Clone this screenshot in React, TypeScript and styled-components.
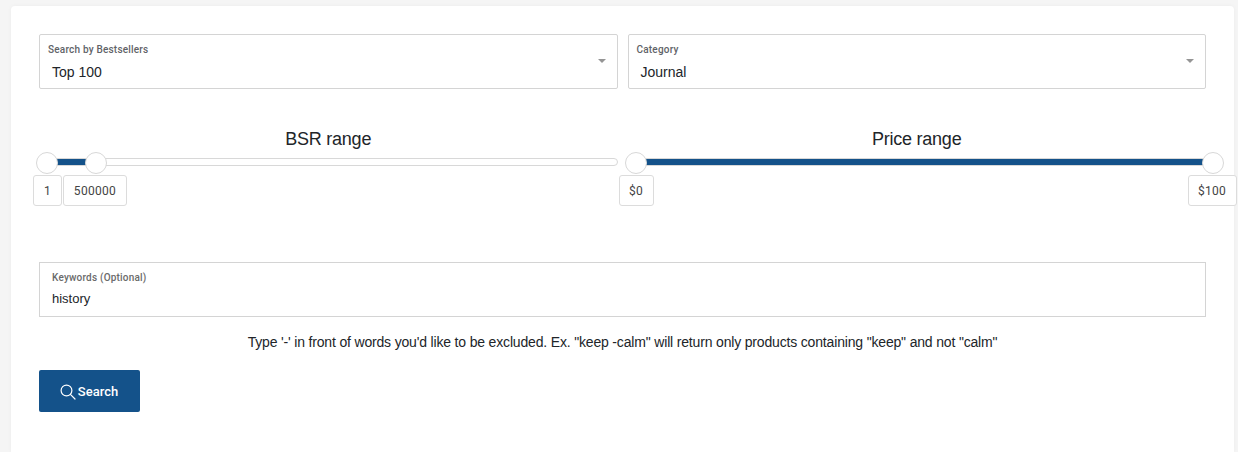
import styled, { createGlobalStyle } from "styled-components";

const GlobalStyle = createGlobalStyle`
  html, body {
    margin: 0;
    padding: 0;
    height: 452px;
    overflow: hidden;
    background: #f5f5f5;
    font-family: "Liberation Sans", Arial, sans-serif;
  }
`;

const SLIDERS = [
  {
    title: "BSR range",
    fillLeft: 8,
    fillWidth: 49,
    thumbs: [7, 56],
    labels: [
      { text: "1", left: -6, width: 29 },
      { text: "500000", left: 24, width: 64 },
    ],
  },
  {
    title: "Price range",
    fillLeft: 8,
    fillWidth: 577,
    thumbs: [7, 584],
    labels: [
      { text: "$0", left: -9, width: 35 },
      { text: "$100", left: 560, width: 49 },
    ],
  },
];

export default function App() {
  return (
    <>
      <GlobalStyle />
      <Page>
        <Card>
          <Row>
            <SelectField>
              <SelectLabel>Search by Bestsellers</SelectLabel>
              <Value>Top 100</Value>
              <Caret />
            </SelectField>
            <SelectField>
              <SelectLabel>Category</SelectLabel>
              <Value>Journal</Value>
              <Caret />
            </SelectField>
          </Row>
          <SliderRow>
            {SLIDERS.map((slider) => (
              <SliderBlock key={slider.title}>
                <SliderTitle>{slider.title}</SliderTitle>
                <Track>
                  <Fill $left={slider.fillLeft} $width={slider.fillWidth} />
                  {slider.thumbs.map((x) => (
                    <Thumb key={x} $x={x} />
                  ))}
                  {slider.labels.map((label) => (
                    <ValueLabel key={label.text} $left={label.left} $width={label.width}>
                      {label.text}
                    </ValueLabel>
                  ))}
                </Track>
              </SliderBlock>
            ))}
          </SliderRow>
          <KeywordField>
            <KeywordLabel>Keywords (Optional)</KeywordLabel>
            <KeywordValue>history</KeywordValue>
          </KeywordField>
          <Hint>
            Type '-' in front of words you'd like to be excluded. Ex. "keep -calm" will return only
            products containing "keep" and not "calm"
          </Hint>
          <SearchButton>
            <svg width="16" height="16" viewBox="0 0 16 16" fill="none" stroke="currentColor" strokeWidth="1.2">
              <circle cx="6.5" cy="6.5" r="5.4" />
              <path d="M10.4 10.4 L15 15" strokeLinecap="round" />
            </svg>
            <span>Search</span>
          </SearchButton>
        </Card>
      </Page>
    </>
  );
}

const Page = styled.div`
  height: 452px;
  padding: 6px 4px 0 11px;
  box-sizing: border-box;
`;

const Card = styled.div`
  height: 446px;
  box-sizing: border-box;
  background: #fff;
  border-radius: 4px 4px 0 0;
  padding: 28px 28px 0 28px;
  box-shadow: 0 0 4px rgba(0, 0, 0, 0.04);
`;

const Row = styled.div`
  display: grid;
  grid-template-columns: 1fr 1fr;
  gap: 10px;
`;

const SelectField = styled.div`
  position: relative;
  height: 55px;
  box-sizing: border-box;
  border: 1px solid #d4d4d4;
  border-radius: 2px;
  padding: 9px 8px 0;
`;

const SelectLabel = styled.div`
  font-family: Roboto, "Liberation Sans", sans-serif;
  font-size: 10px;
  line-height: 12px;
  font-weight: 500;
  letter-spacing: 0.2px;
  color: #5f6368;
`;

const Value = styled.div`
  margin: 8px 0 0 4px;
  font-size: 14px;
  line-height: 16px;
  color: #212529;
`;

const Caret = styled.div`
  position: absolute;
  right: 11px;
  top: 24px;
  width: 0;
  height: 0;
  border-left: 4.5px solid transparent;
  border-right: 4.5px solid transparent;
  border-top: 4.5px solid #959595;
`;

const SliderRow = styled.div`
  display: flex;
  gap: 10px;
  margin-top: 39px;
`;

const SliderBlock = styled.div`
  flex: 1;
  height: 134px;
`;

const SliderTitle = styled.div`
  text-align: center;
  font-size: 18px;
  line-height: 22px;
  letter-spacing: -0.25px;
  color: #212529;
`;

const Track = styled.div`
  position: relative;
  margin-top: 8px;
  height: 8px;
  box-sizing: border-box;
  border: 1px solid #d8d8d8;
  border-radius: 4px;
  background: #fff;
`;

const Fill = styled.div<{ $left: number; $width: number }>`
  position: absolute;
  top: 0;
  left: ${({ $left }) => $left}px;
  width: ${({ $width }) => $width}px;
  height: 6px;
  background: #14528a;
`;

const Thumb = styled.div<{ $x: number }>`
  position: absolute;
  top: -7px;
  left: ${({ $x }) => $x - 11}px;
  width: 20px;
  height: 20px;
  box-sizing: content-box;
  border: 1px solid #d8d8d8;
  border-radius: 50%;
  background: #fff;
`;

const ValueLabel = styled.div<{ $left: number; $width: number }>`
  position: absolute;
  top: 16px;
  left: ${({ $left }) => $left - 1}px;
  width: ${({ $width }) => $width}px;
  height: 31px;
  box-sizing: border-box;
  display: flex;
  align-items: center;
  justify-content: center;
  border: 1px solid #dcdcdc;
  border-radius: 3px;
  background: #fff;
  font-family: Roboto, "Liberation Sans", sans-serif;
  font-size: 12px;
  letter-spacing: 0.3px;
  color: #444;
`;

const KeywordField = styled.div`
  height: 55px;
  box-sizing: border-box;
  border: 1px solid #d4d4d4;
  padding: 9px 12px 0;
`;

const KeywordLabel = styled.div`
  font-family: Roboto, "Liberation Sans", sans-serif;
  font-size: 10px;
  line-height: 12px;
  font-weight: 500;
  letter-spacing: 0.2px;
  color: #6a6a6a;
`;

const KeywordValue = styled.div`
  margin-top: 7px;
  font-size: 13px;
  line-height: 16px;
  color: #212529;
`;

const Hint = styled.div`
  margin-top: 17px;
  text-align: center;
  font-size: 14px;
  line-height: 16px;
  letter-spacing: -0.17px;
  color: #212529;
`;

const SearchButton = styled.button`
  display: flex;
  align-items: center;
  justify-content: center;
  gap: 2px;
  margin-top: 20px;
  width: 101px;
  height: 42px;
  padding: 1px 1px 0 0;
  border: none;
  border-radius: 2px;
  background: #14528a;
  color: #fff;
  font-family: Roboto, "Liberation Sans", sans-serif;
  font-size: 13px;
  font-weight: 500;
`;
